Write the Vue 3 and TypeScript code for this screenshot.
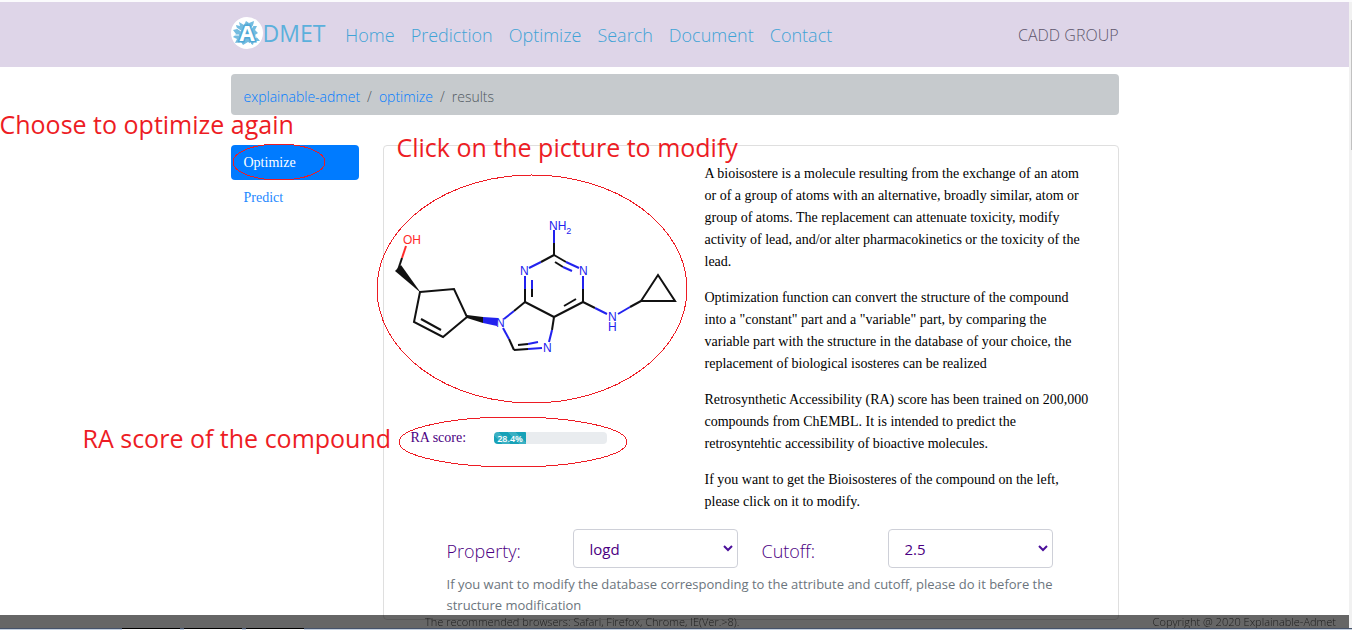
<script setup lang="ts">
import { ref } from 'vue'

interface Bond {
  x1: number
  y1: number
  x2: number
  y2: number
  color: string
}

const black = '#111111'
const blue = '#2222ee'
const red = '#ff2a2a'

const navItems: string[] = ['Home', 'Prediction', 'Optimize', 'Search', 'Document', 'Contact']

const score = 28.4
const property = ref('logd')
const cutoff = ref('2.5')

const paragraphs: string[] = [
  'A bioisostere is a molecule resulting from the exchange of an atom or of a group of atoms with an alternative, broadly similar, atom or group of atoms. The replacement can attenuate toxicity, modify activity of lead, and/or alter pharmacokinetics or the toxicity of the lead.',
  'Optimization function can convert the structure of the compound into a "constant" part and a "variable" part, by comparing the variable part with the structure in the database of your choice, the replacement of biological isosteres can be realized',
  'Retrosynthetic Accessibility (RA) score has been trained on 200,000 compounds from ChEMBL. It is intended to predict the retrosyntehtic accessibility of bioactive molecules.',
  'If you want to get the Bioisosteres of the compound on the left, please click on it to modify.',
]

function bond(x1: number, y1: number, x2: number, y2: number, color: string): Bond {
  return { x1, y1, x2, y2, color }
}

const bonds: Bond[] = [
  bond(406, 246, 402, 258, red),
  bond(402, 258, 398, 270, black),
  bond(421, 319, 441, 330, black),
  bond(504, 319, 514, 311, blue),
  bond(514, 311, 525, 302, black),
  bond(525, 302, 525, 289, black),
  bond(525, 289, 525, 276, blue),
  bond(532, 297, 532, 289, black),
  bond(532, 289, 532, 280, blue),
  bond(529, 268, 541, 262, blue),
  bond(541, 262, 554, 255, black),
  bond(554, 255, 554, 243, black),
  bond(554, 243, 554, 230, blue),
  bond(554, 255, 566, 262, black),
  bond(566, 262, 579, 268, blue),
  bond(555, 262, 563, 267, black),
  bond(563, 267, 572, 271, blue),
  bond(583, 276, 583, 289, blue),
  bond(583, 289, 583, 302, black),
  bond(583, 302, 554, 317, black),
  bond(576, 299, 564, 306, black),
  bond(554, 317, 525, 302, black),
  bond(554, 317, 552, 330, black),
  bond(552, 330, 549, 342, blue),
  bond(542, 348, 528, 349, blue),
  bond(528, 349, 514, 350, black),
  bond(518, 345, 528, 344, black),
  bond(528, 344, 538, 342, blue),
  bond(514, 350, 509, 339, black),
  bond(509, 339, 503, 328, blue),
  bond(583, 302, 595, 308, black),
  bond(595, 308, 607, 314, blue),
  bond(618, 314, 630, 307, blue),
  bond(630, 307, 641, 301, black),
]
</script>

<template>
  <div class="page">
    <header class="topbar">
      <div class="container topbar-row">
        <a class="brand" href="#">
          <svg class="logo" viewBox="0 0 32 32" aria-hidden="true">
            <circle cx="16" cy="16" r="16" fill="#ffffff" />
            <path
              d="M5 8 9 9 8 5 13 8 15 4 18 6 23 4 22 9 26 9 24 13 27 16 24 18 29 24 23 24 22 28 17 25 12 28 10 25 4 26 6 22 2 20 5 17 2 13 6 12Z"
              fill="#74bce0"
            />
            <path d="M4 10 10 14M24 6 20 12M27 20 21 20M8 28 12 22M19 29 20 24M2 18 8 18" stroke="#ffffff" stroke-width="1" />
            <text x="16" y="24" text-anchor="middle" class="logo-letter">A</text>
          </svg>
          <span>DMET</span>
        </a>
        <nav class="nav">
          <a v-for="item in navItems" :key="item" href="#">{{ item }}</a>
        </nav>
        <span class="group">CADD GROUP</span>
      </div>
    </header>

    <main class="container body">
      <nav class="crumbs" aria-label="breadcrumb">
        <a href="#">explainable-admet</a>
        <span>/</span>
        <a href="#">optimize</a>
        <span>/</span>
        <span>results</span>
      </nav>

      <div class="columns">
        <nav class="side">
          <a class="active" href="#">Optimize</a>
          <a href="#">Predict</a>
        </nav>

        <section class="card">
          <div class="top">
            <div class="compound">
              <svg class="molecule" viewBox="384 200 306 180" role="img" aria-label="Compound structure">
                <line
                  v-for="(b, i) in bonds"
                  :key="i"
                  :x1="b.x1"
                  :y1="b.y1"
                  :x2="b.x2"
                  :y2="b.y2"
                  :stroke="b.color"
                />
                <path d="M420 292 454 289 467 317 443 337 414 322Z" />
                <path d="M641 301 658 275 675 301Z" />
                <polygon points="421,293 395,271 401,265" fill="#111111" />
                <polygon points="467,315 483,317 483,323 467,318" fill="#111111" />
                <polygon points="483,317 498,318 497,326 483,323" fill="#2222ee" />
                <g fill="#2222ee">
                  <text x="549" y="230">NH<tspan dy="4" class="sub">2</tspan></text>
                  <text x="520" y="275">N</text>
                  <text x="579" y="275">N</text>
                  <text x="496" y="327">N</text>
                  <text x="543" y="352">N</text>
                  <text x="608" y="321">N<tspan x="608" dy="10">H</tspan></text>
                </g>
                <text x="403" y="244" fill="#ff2a2a">OH</text>
              </svg>
              <div class="score">
                <span id="score-label">RA score:</span>
                <div class="track" role="progressbar" aria-labelledby="score-label" :aria-valuenow="score">
                  <div class="fill" :style="{ width: score + '%' }">{{ score }}%</div>
                </div>
              </div>
            </div>
            <div class="about">
              <p v-for="(text, i) in paragraphs" :key="i">{{ text }}</p>
            </div>
          </div>

          <form class="filters">
            <label for="property">Property:</label>
            <div class="picker">
              <select id="property" v-model="property">
                <option>logd</option>
              </select>
              <svg viewBox="0 0 10 8" aria-hidden="true"><path d="M1 2 5 6 9 2" /></svg>
            </div>
            <label for="cutoff">Cutoff:</label>
            <div class="picker">
              <select id="cutoff" v-model="cutoff">
                <option>2.5</option>
              </select>
              <svg viewBox="0 0 10 8" aria-hidden="true"><path d="M1 2 5 6 9 2" /></svg>
            </div>
            <p class="hint">
              If you want to modify the database corresponding to the attribute and cutoff, please do it before the
              structure modification
            </p>
          </form>
        </section>
      </div>

      <svg class="rings" viewBox="0 0 888 560" aria-hidden="true">
        <ellipse cx="48" cy="95" rx="46" ry="18" />
        <ellipse cx="301" cy="222" rx="155" ry="114" />
        <ellipse cx="282" cy="375" rx="114" ry="25" />
      </svg>
      <span class="note note-again">Choose to optimize again</span>
      <span class="note note-click">Click on the picture to modify</span>
      <span class="note note-score">RA score of the compound</span>
    </main>

    <footer class="footer">
      <span>The recommended browsers: Safari, Firefox, Chrome, IE(Ver.&gt;8).</span>
      <span>Copyright @ 2020 Explainable-Admet</span>
    </footer>
    <div class="taskbar"><i></i><i></i><i></i></div>
    <div class="scroll"><div class="thumb"></div></div>
  </div>
</template>

<style>
body {
  margin: 0;
  background: #ffffff;
}
</style>

<style scoped>
.page {
  padding-right: 3px;
  font-family: "Open Sans", "Noto Sans", sans-serif;
  border-top: 2px solid #fbfbfd;
}
.page * {
  box-sizing: border-box;
}
a {
  text-decoration: none;
}
.container {
  max-width: 888px;
  margin: 0 auto;
}
.topbar {
  background: #ded5e8;
}
.topbar-row {
  display: flex;
  align-items: center;
  height: 65px;
}
.brand {
  display: flex;
  align-items: center;
  margin-right: 20px;
  padding-bottom: 4px;
  color: #5bb0dc;
  font-size: 23px;
}
.logo {
  width: 32px;
  height: 32px;
}
.logo-letter {
  font: bold 22px "Open Sans", sans-serif;
  fill: #ffffff;
  stroke: #4fa8d6;
  stroke-width: 3;
  paint-order: stroke;
}
.nav {
  display: flex;
  gap: 16px;
  font-size: 18px;
  font-weight: 300;
}
.nav a {
  color: #3fa3d6;
}
.group {
  margin-left: auto;
  color: #5d566c;
  font-size: 16px;
  font-weight: 300;
}
.body {
  position: relative;
  padding-top: 7px;
}
.crumbs {
  display: flex;
  align-items: center;
  gap: 7px;
  height: 41px;
  padding: 3px 13px 0;
  border-radius: 4px;
  background: #c6cacd;
  color: #50585f;
  font-size: 14px;
  font-weight: 300;
}
.crumbs a {
  color: #007bff;
}
.columns {
  display: flex;
  gap: 24px;
  margin-top: 30px;
}
.side {
  flex: none;
  width: 128px;
  font: 14px/35px "Liberation Serif", serif;
}
.side a {
  display: block;
  padding: 0 13px;
  border-radius: 4px;
  color: #1e88ff;
}
.side .active {
  background: #007bff;
  color: #ffffff;
}
.card {
  flex: 1;
  min-width: 0;
  padding: 17px 15px 3px 0;
  border: 1px solid #dfdfdf;
  border-radius: 4px;
}
.top {
  display: flex;
  gap: 15px;
}
.compound {
  flex: none;
  width: 306px;
  padding-top: 37px;
}
.molecule {
  display: block;
  width: 306px;
  height: 180px;
  fill: none;
  stroke-width: 2;
}
.molecule path {
  stroke: #111111;
}
.molecule text {
  font: 12px "Liberation Sans", sans-serif;
}
.molecule .sub {
  font-size: 9px;
}
.score {
  display: flex;
  align-items: center;
  gap: 28px;
  margin: 48px 83px 0 27px;
  color: #4b0082;
  font: 14px/20px "Liberation Serif", serif;
}
.track {
  flex: 1;
  height: 12px;
  overflow: hidden;
  border-radius: 4px;
  background: #e9ecef;
}
.fill {
  height: 12px;
  color: #ffffff;
  font: 600 9px/13px "Open Sans", sans-serif;
  text-align: center;
  background: repeating-linear-gradient(45deg, #17a2b8 0, #17a2b8 6px, #3ab0c3 6px, #3ab0c3 12px);
}
.about {
  flex: 1;
  padding-right: 12px;
  color: #000000;
  font: 14px/22px "Liberation Serif", serif;
}
.about p {
  margin: 0 0 14px;
}
.filters {
  display: grid;
  grid-template-columns: 102px 165px 102px 165px;
  gap: 6px 24px;
  align-items: center;
  margin: 2px 48px 0 63px;
  color: #4b0082;
  font-size: 18px;
  font-weight: 300;
}
.filters label {
  padding-top: 4px;
}
.picker {
  position: relative;
}
.picker select {
  display: block;
  width: 100%;
  height: 39px;
  padding: 0 16px;
  border: 1px solid #ced0d8;
  border-radius: 4px;
  appearance: none;
  background: #ffffff;
  color: #4b0082;
  font: 15px "Open Sans", sans-serif;
}
.picker svg {
  position: absolute;
  top: 15px;
  right: 5px;
  width: 10px;
  height: 8px;
  fill: none;
  stroke: #4b0f9a;
  stroke-width: 2;
}
.hint {
  grid-column: 1 / -1;
  margin: 0;
  color: #6c757d;
  font-size: 13px;
  font-weight: 400;
  line-height: 21px;
}
.rings {
  position: absolute;
  top: 0;
  left: 0;
  width: 888px;
  height: 560px;
  overflow: visible;
  pointer-events: none;
  fill: none;
  stroke: #ed1c24;
  shape-rendering: crispEdges;
}
.note {
  position: absolute;
  color: #ed1c24;
  font-size: 25px;
  line-height: 32px;
  white-space: nowrap;
  pointer-events: none;
}
.note-again {
  top: 41px;
  left: -231px;
}
.note-click {
  top: 64px;
  left: 166px;
}
.note-score {
  top: 355px;
  left: -148px;
}
.footer {
  position: fixed;
  right: 3px;
  bottom: 2px;
  left: 0;
  display: flex;
  justify-content: space-between;
  height: 13px;
  padding: 0 13px 0 425px;
  overflow: hidden;
  background: rgba(0, 0, 0, 0.6);
  color: #1c1c1c;
  font-size: 11px;
  font-weight: 300;
  line-height: 14px;
}
.taskbar {
  position: fixed;
  right: 0;
  bottom: 0;
  left: 0;
  display: flex;
  gap: 4px;
  height: 2px;
  padding-left: 122px;
  border-top: 1px solid #46536a;
  background: #c5d0df;
}
.taskbar i {
  width: 58px;
  height: 2px;
  margin-top: -1px;
  border-top: 1px solid #000000;
  background: #ffffff;
}
.scroll {
  position: fixed;
  top: 2px;
  right: 0;
  bottom: 2px;
  width: 3px;
  padding: 18px 0 0 2px;
  background: #f1f1f1;
}
.thumb {
  height: 130px;
  background: #c1c1c1;
}
</style>
